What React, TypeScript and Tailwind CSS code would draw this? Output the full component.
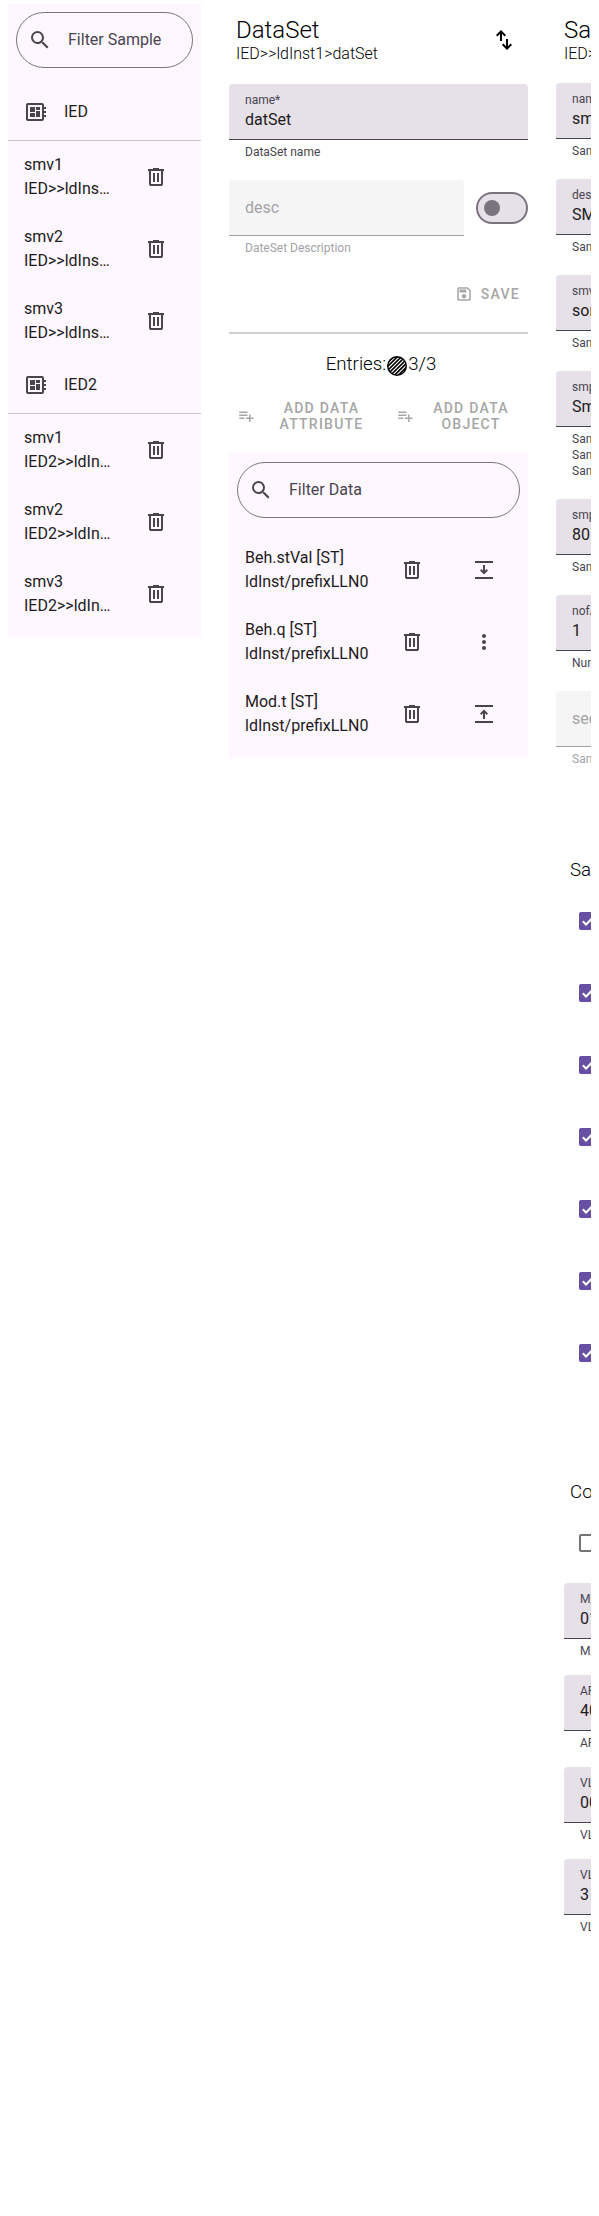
import React from "react";

const paths = {
  search:
    "M15.5 14h-.79l-.28-.27A6.471 6.471 0 0 0 16 9.5 6.5 6.5 0 1 0 9.5 16c1.61 0 3.09-.59 4.23-1.57l.27.28v.79l5 4.99L20.49 19l-4.99-5zm-6 0C7.01 14 5 11.99 5 9.5S7.01 5 9.5 5 14 7.01 14 9.5 11.99 14 9.5 14z",
  board:
    "M22 9V7h-2V5c0-1.1-.9-2-2-2H4c-1.1 0-2 .9-2 2v14c0 1.1.9 2 2 2h14c1.1 0 2-.9 2-2v-2h2v-2h-2v-2h2v-2h-2V9h2zm-4 10H4V5h14v14zM6 13h5v4H6v-4zm6-6h4v3h-4V7zM6 7h5v5H6V7zm6 4h4v6h-4v-6z",
  trash:
    "M7 21q-.825 0-1.412-.587T5 19V6H4V4h5V3h6v1h5v2h-1v13q0 .825-.587 1.413T17 21zM17 6H7v13h10zM9 17h2V8H9zm4 0h2V8h-2z",
  swap:
    "M8 13V5.825L5.425 8.4 4 7l5-5 5 5-1.425 1.4L10 5.825V13zm7 9-5-5 1.425-1.4L14 18.175V11h2v7.175l2.575-2.575L20 17z",
  save:
    "M17 3H5c-1.11 0-2 .9-2 2v14c0 1.1.89 2 2 2h14c1.1 0 2-.9 2-2V7l-4-4zm2 16H5V5h11.17L19 7.83V19zm-7-7c-1.66 0-3 1.34-3 3s1.34 3 3 3 3-1.34 3-3-1.34-3-3-3zM6 6h9v4H6z",
  add:
    "M14 10H3v2h11v-2zm0-4H3v2h11V6zm4 8v-4h-2v4h-4v2h4v4h2v-4h4v-2h-4zM3 16h7v-2H3v2z",
  down:
    "M3 3h18v2H3zM3 19h18v2H3zM12 16.5l-4-4 1.4-1.4 1.6 1.6V7h2v5.7l1.6-1.6 1.4 1.4z",
  up:
    "M3 3h18v2H3zM3 19h18v2H3zM12 7.5l4 4-1.4 1.4-1.6-1.6V17h-2v-5.7l-1.6 1.6L8 11.5z",
  more:
    "M12 8c1.1 0 2-.9 2-2s-.9-2-2-2-2 .9-2 2 .9 2 2 2zm0 2c-1.1 0-2 .9-2 2s.9 2 2 2 2-.9 2-2-.9-2-2-2zm0 6c-1.1 0-2 .9-2 2s.9 2 2 2 2-.9 2-2-.9-2-2-2z",
};

type IconName = keyof typeof paths;

function Icon({ name, className = "size-6" }: { name: IconName; className?: string }) {
  return (
    <svg viewBox="0 0 24 24" fill="currentColor" fillRule="evenodd" className={`shrink-0 ${className}`}>
      <path d={paths[name]} />
    </svg>
  );
}

function Filter({ label }: { label: string }) {
  return (
    <div className="mx-2 flex h-14 items-center gap-4 rounded-full border border-[#79747e] pl-[11px] text-[#49454f]">
      <Icon name="search" />
      <span className="whitespace-nowrap">{label}</span>
    </div>
  );
}

function Item({ title, sub, action, narrow }: { title: string; sub: string; action?: IconName; narrow?: boolean }) {
  return (
    <li className="flex h-[72px] items-center pl-4 text-[#49454f]">
      <div className={narrow ? "w-[88px] text-[#1d1b20]" : "w-[138px] text-[#1d1b20]"}>
        <div className="truncate">{title}</div>
        <div className="truncate">{sub}</div>
      </div>
      <Icon name="trash" className={narrow ? "ml-8 size-6" : "ml-[17px] size-6"} />
      {action && <Icon name={action} className="ml-12 size-6" />}
    </li>
  );
}

function Group({ name, path }: { name: string; path: string }) {
  return (
    <>
      <li className="flex h-[57px] items-center gap-4 border-b border-[#cac4d0] pl-4 text-[#1d1b20]">
        <Icon name="board" className="size-6 text-[#49454f]" />
        {name}
      </li>
      <Item narrow title="smv1" sub={path} />
      <Item narrow title="smv2" sub={path} />
      <Item narrow title="smv3" sub={path} />
    </>
  );
}

interface FieldProps {
  label: string;
  value?: string;
  help: string[];
  className?: string;
}

function Field({ label, value, help, className = "" }: FieldProps) {
  const off = value === undefined;
  return (
    <div className={className}>
      <div
        className={
          off
            ? "flex h-14 flex-col justify-center rounded-t border-b border-[#a4a3a5] bg-[#f5f5f5] px-4 text-[#a4a3a5]"
            : "flex h-14 flex-col rounded-t border-b border-[#49454f] bg-[#e6e0e9] px-4 pt-2 text-[#49454f]"
        }
      >
        {off ? (
          <span>{label}</span>
        ) : (
          <>
            <span className="text-xs leading-4 whitespace-nowrap">{label}</span>
            <span className="leading-6 whitespace-nowrap text-[#1d1b20]">{value}</span>
          </>
        )}
      </div>
      <div className={`px-4 pt-1 text-xs leading-4 whitespace-nowrap ${off ? "text-[#a4a3a5]" : "text-[#49454f]"}`}>
        {help.map((line, i) => (
          <div key={i}>{line}</div>
        ))}
      </div>
    </div>
  );
}

function Heading({ title, path }: { title: string; path: string }) {
  return (
    <div className="font-light whitespace-nowrap text-black">
      <h1 className="text-2xl leading-7">{title}</h1>
      <p className="text-base leading-5">{path}</p>
    </div>
  );
}

function AddButton({ label, className }: { label: string; className: string }) {
  return (
    <button className={`flex items-center text-sm leading-4 font-medium tracking-[1.25px] text-[#a6a6a6] uppercase ${className}`}>
      <Icon name="add" className="size-[18px]" />
      <span className="flex-1 px-4 text-center">{label}</span>
    </button>
  );
}

const optionNames = ["refreshTime", "sampleSynchronized", "sampleRate", "dataSet", "security", "timestamp", "synchSourceId"];

const sampledFields: FieldProps[] = [
  { label: "name*", value: "smv1", help: ["Sampled Value Name"] },
  { label: "desc", value: "SMV description", help: ["Sampled Value Description"] },
  { label: "smvID*", value: "some/reference", help: ["Sampled Value ID"] },
  { label: "smpMod", value: "SmpPerPeriod", help: ["Sampled Value mode:", "Samples per period", "Samples per second"] },
  { label: "smpRate*", value: "80", help: ["Sample Rate"] },
  { label: "nofASDU*", value: "1", help: ["Number of ASDU"] },
  { label: "securityEnable", help: ["Sampled Value Security"] },
];

export default function App() {
  return (
    <div className="h-[2216px] w-[599px] overflow-hidden bg-white pr-2 font-['Roboto',sans-serif] text-base text-black">
      <div className="flex h-full items-start overflow-hidden pl-2">
        <aside className="mt-1 w-[193px] shrink-0 bg-[#fef7ff] py-2">
          <Filter label="Filter Sample" />
          <ul className="mt-4">
            <Group name="IED" path="IED>>ldInst1" />
            <Group name="IED2" path="IED2>>ldInst1" />
          </ul>
        </aside>

        <main className="ml-7 w-[299px] shrink-0">
          <header className="flex h-[84px] items-start pt-4 pr-3 pl-[7px]">
            <Heading title="DataSet" path="IED>>ldInst1>datSet" />
            <Icon name="swap" className="mt-3 ml-auto size-6" />
          </header>
          <Field label="name*" value="datSet" help={["DataSet name"]} />
          <div className="mt-5 flex items-start justify-between">
            <Field label="desc" help={["DateSet Description"]} className="w-[235px]" />
            <div className="mt-3 flex h-8 w-[52px] items-center rounded-full border-2 border-[#79747e] bg-[#e6e0e9] pl-1.5">
              <div className="size-4 rounded-full bg-[#79747e]" />
            </div>
          </div>
          <div className="mt-[29px] flex h-[18px] items-center justify-end gap-2 pr-2 text-sm font-medium tracking-[1.25px] text-[#a6a6a6]">
            <Icon name="save" className="size-[18px]" />
            SAVE
          </div>
          <div className="mt-[29px] h-0.5 bg-[#cfcfcf]" />
          <h3 className="mt-[18px] flex h-6 items-center justify-center pl-[5px] text-[18.72px] font-light">
            Entries:
            <svg viewBox="0 0 22 22" className="mt-1 size-[22px]">
              <defs>
                <clipPath id="disc">
                  <circle cx="11" cy="11" r="8.6" />
                </clipPath>
              </defs>
              <circle cx="11" cy="11" r="10" />
              <path
                clipPath="url(#disc)"
                stroke="white"
                strokeWidth="1.1"
                d="M0 11.2 11.2 0M0 15.1 15.1 0M0 19 19 0M0 22.9 22.9 0M0 26.8 26.8 0M0 30.7 30.7 0M0 34.6 34.6 0"
              />
            </svg>
            3/3
          </h3>
          <div className="mt-0.5 flex h-[76px] items-center">
            <AddButton label="Add data attribute" className="ml-2 w-[151px]" />
            <AddButton label="Add data object" className="ml-2 w-[132px]" />
          </div>
          <section className="bg-[#fef7ff] py-2">
            <Filter label="Filter Data" />
            <ul className="mt-4">
              <Item title="Beh.stVal [ST]" sub="ldInst/prefixLLN0" action="down" />
              <Item title="Beh.q [ST]" sub="ldInst/prefixLLN0" action="more" />
              <Item title="Mod.t [ST]" sub="ldInst/prefixLLN0" action="up" />
            </ul>
          </section>
        </main>

        <section className="ml-7 w-[299px] shrink-0">
          <header className="h-[83px] pt-4 pl-2">
            <Heading title="Sampled Value Control" path="IED>>ldInst1>smv1" />
          </header>
          <div className="flex flex-col gap-5">
            {sampledFields.map((field) => (
              <Field key={field.label} {...field} />
            ))}
          </div>
          <h3 className="mt-[91px] pl-3.5 text-[18.72px] leading-6 font-light whitespace-nowrap">Sampled Value Options</h3>
          <ul className="mt-[3px]">
            {optionNames.map((option) => (
              <li key={option} className="flex h-[72px] items-center gap-4 pl-[23px]">
                <span className="flex size-[18px] shrink-0 items-center justify-center rounded-[2px] bg-[#6750a4]">
                  <svg viewBox="0 0 18 18" className="size-[18px]" fill="none" stroke="white" strokeWidth="2">
                    <path d="M3.8 9.3 7 12.5l7.2-7.2" />
                  </svg>
                </span>
                {option}
              </li>
            ))}
          </ul>
          <h3 className="mt-[91px] pl-3.5 text-[18.72px] leading-6 font-light whitespace-nowrap">Communication Settings</h3>
          <div className="mt-[30px] flex h-[18px] items-center gap-4 pl-[23px]">
            <span className="size-[18px] shrink-0 rounded-[2px] border-2 border-[#757575]" />
            Add Type
          </div>
          <div className="mt-[31px] ml-2 flex flex-col gap-4">
            <Field label="MAC-Address*" value="01-0C-CD-04-00-00" help={["MAC address"]} />
            <Field label="APPID*" value="4000" help={["APPID"]} />
            <Field label="VLAN-ID" value="000" help={["VLAN ID"]} />
            <Field label="VLAN-PRIORITY*" value="3" help={["VLAN Priority"]} />
          </div>
        </section>
      </div>
    </div>
  );
}
